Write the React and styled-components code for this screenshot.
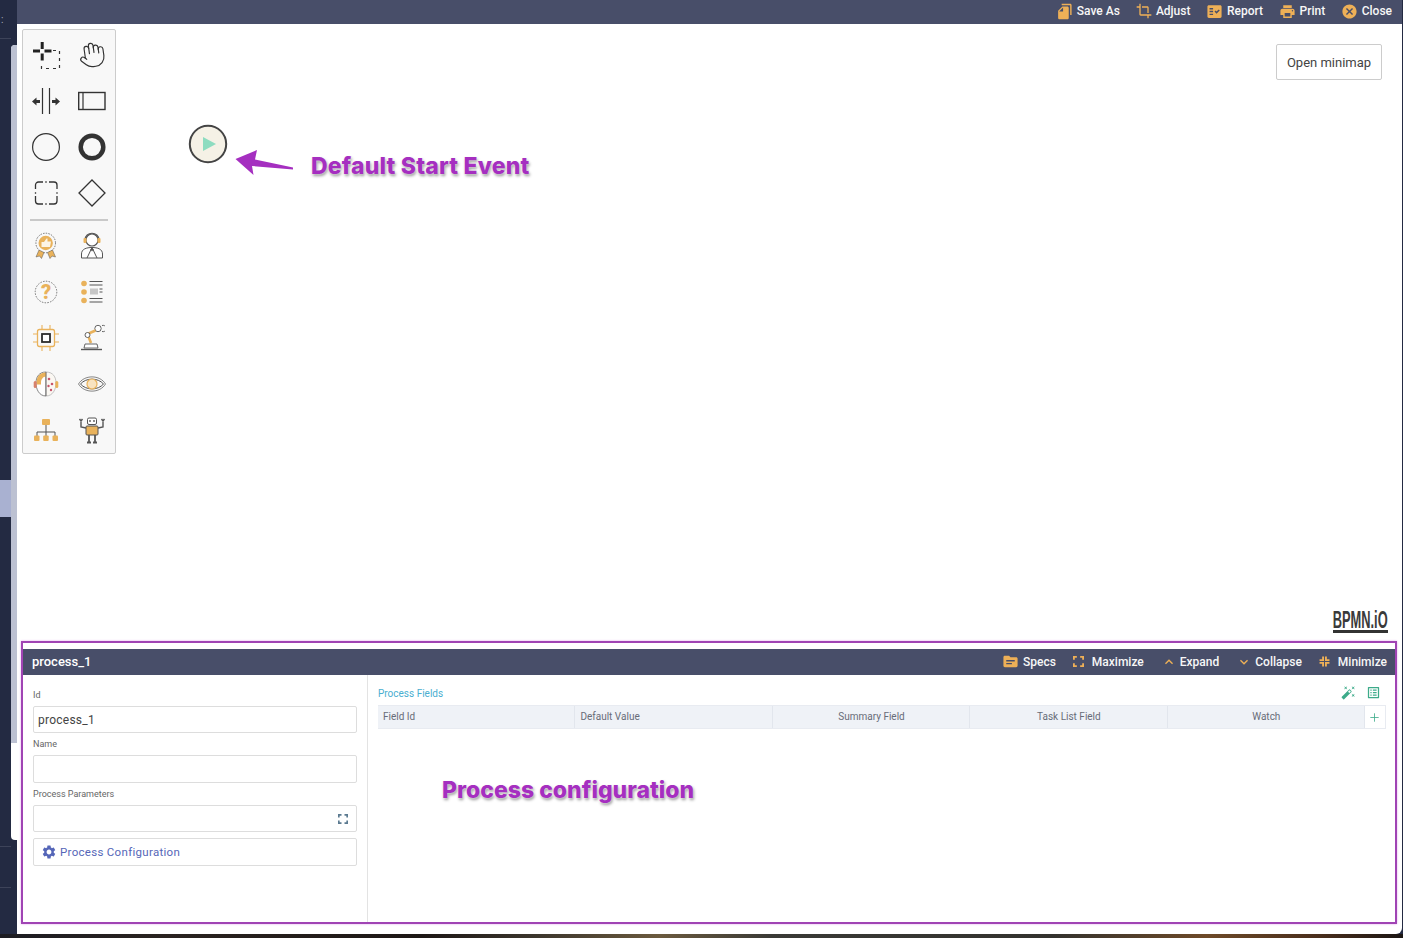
import React from "react";
import styled, { createGlobalStyle } from "styled-components";
import { MdFileCopy, MdCrop, MdFactCheck, MdPrint, MdCancel, MdTopic, MdAutoFixHigh, MdOutlineListAlt, MdSettings, MdKeyboardArrowUp, MdKeyboardArrowDown } from "react-icons/md";
import { Plus, Hand } from "lucide-react";

const Global = createGlobalStyle`
  html, body { margin: 0; padding: 0; background: #232a42; }
  body { font-family: Roboto, "Liberation Sans", sans-serif; overflow: hidden; }
  * { box-sizing: border-box; }
`;

const Page = styled.div`
  width: 1403px; height: 938px; display: flex; flex-direction: column; overflow: hidden;
  background: #232a42;
`;
const Row = styled.div`display: flex; height: 934px;`;
const WoodStrip = styled.div`
  height: 4px; flex: none;
  background: linear-gradient(90deg, #1c1c22 0, #2a2320 12%, #1d1715 30%, #3b352c 38%, #6b5a3e 47%, #3a3a36 55%, #33322e 75%, #6e4a28 86%, #4a2e1c 94%, #1b1613 100%);
`;
const Sidebar = styled.aside`width: 17px; flex: none; display: flex; background: #232a42;`;
const Nav = styled.div`width: 11px; flex: none; display: flex; flex-direction: column; color: #aab; font-size: 10px;`;
const NavGlyph = styled.div`height: 39px; line-height: 40px; padding-left: 1px; border-bottom: 1px solid #3d4359;`;
const NavActive = styled.div`height: 37px; margin-top: 441px; background: #a9b1d1;`;
const NavLine = styled.div`height: 1px; margin-top: ${p => p.$gap}px; background: #3d4359;`;
const Scroll = styled.div`
  width: 6px; flex: none; margin-top: 45px; height: 795px; background: #fff; border-radius: 4px 0 0 4px; overflow: hidden;
`;
const ScrollThumb = styled.div`height: 698px; background: #bcc1d2;`;

const Main = styled.main`
  width: 1385px; flex: none; display: flex; flex-direction: column; background: #fff; border-bottom-right-radius: 6px;
  margin-right: 1px;
`;
const TopBar = styled.header`
  height: 24px; flex: none; display: flex; align-items: center; justify-content: flex-end; gap: 16px; padding: 0 10px 2px 0;
  background: #484e69; color: #fff;
`;
const BarAction = styled.div`
  display: flex; align-items: center; gap: ${p => p.$gap ?? 3.5}px; font-size: 12px; font-weight: 500; white-space: nowrap; color: #f7f7f7;
  svg { color: #eeb057; flex: none; }
`;
const Canvas = styled.section`position: relative; height: 617px; flex: none; background: #fff;`;
const Palette = styled.div`
  position: absolute; left: 5px; top: 5px; width: 94px; height: 425px; padding-top: 2px;
  background: #f8f8f8; border: 1px solid #ccc; border-radius: 2px;
`;
const PaletteGrid = styled.div`display: grid; grid-template-columns: 46px 46px; grid-auto-rows: 46px;`;
const PaletteCell = styled.div`display: flex; align-items: center; justify-content: center;`;
const Separator = styled.hr`margin: 3px 7px 2px 7px; height: 2px; border: 0; background: #c9c9c9;`;
const MinimapButton = styled.button`
  position: absolute; right: 20px; top: 20px; width: 106px; height: 36px; padding: 0;
  font: 400 13px Roboto, sans-serif; color: #444; background: #fff; border: 1px solid #ccc; border-radius: 2px;
`;
const Note = styled.div`
  position: absolute; left: ${p => p.$x}px; top: ${p => p.$y}px; white-space: nowrap;
  font: 800 23px Inter, "Liberation Sans", sans-serif; color: #a52fc0; letter-spacing: ${p => p.$ls ?? 0}px;
  text-shadow: 0 0 2px #fff, 1px 2px 3px rgba(0,0,0,.42);
`;
const Pinned = styled.svg`position: absolute; left: ${p => p.$x}px; top: ${p => p.$y}px;`;
const Logo = styled.div`
  position: absolute; right: 14px; top: 586px; height: 23px; width: 55px; border-bottom: 3px solid #333;
  display: flex; justify-content: flex-end;
  font: 700 24px/20px "Liberation Sans", sans-serif; color: #3a3a3a;
  white-space: nowrap;
`;
const LogoText = styled.span`flex: none; transform: scaleX(.535); transform-origin: right center;`;

const Panel = styled.section`
  position: relative; margin-left: 4px; width: 1376px; height: 283px; flex: none; padding-top: 6px;
  border: 2px solid #a044b4; box-shadow: 0 0 2px #e3a8ee; display: flex; flex-direction: column; background: #fff;
`;
const PanelHeader = styled.div`
  height: 26px; flex: none; display: flex; align-items: center; padding: 0 8px 1px 9px; background: #484e69; color: #fff;
`;
const PanelTitle = styled.div`font-size: 13px; font-weight: 500; flex: 1;`;
const PanelActions = styled.div`display: flex; align-items: center; gap: 17px;`;
const PanelBody = styled.div`flex: 1; display: flex; min-height: 0;`;
const FormColumn = styled.div`
  width: 345px; flex: none; display: flex; flex-direction: column; padding: 14px 10px 0; border-right: 1px solid #e3e3e3;
`;
const Field = styled.div`display: flex; flex-direction: column; gap: 5px; margin-bottom: 5px;`;
const Label = styled.label`font-size: 9px; line-height: 12px; height: 12px; color: #666;`;
const InputBox = styled.div`
  height: ${p => p.$h}px; display: flex; align-items: center; justify-content: space-between; padding: 0 8px 0 4px;
  font-size: 12px; letter-spacing: .25px; color: #444; border: 1px solid #ddd; border-radius: 2px; background: #fff;
`;
const ConfigButton = styled.div`
  margin-top: 1px; height: 28px; display: flex; align-items: center; gap: 3px; padding-left: 7px;
  font-size: 11.5px; letter-spacing: .3px; color: #5566b8; border: 1px solid #ddd; border-radius: 2px;
`;
const FieldsColumn = styled.div`flex: 1; display: flex; flex-direction: column; padding: 0 9px 0 10px; min-width: 0;`;
const FieldsToolbar = styled.div`height: 30px; flex: none; display: flex; align-items: center; justify-content: space-between; padding: 7px 5px 0 0;`;
const FieldsTitle = styled.div`font-size: 10px; color: #4aaed0;`;
const ToolIcons = styled.div`display: flex; align-items: center; gap: 10px; margin-top: -3px; color: #3dab8a;`;
const TableHead = styled.div`
  display: grid; grid-template-columns: repeat(5, 1fr) 21px; height: 24px;
  background: #eff2f7; border: 1px solid #e8ebf1; border-width: 1px 0;
`;
const HeadCell = styled.div`
  display: flex; align-items: center; justify-content: ${p => p.$left ? "flex-start" : "center"}; padding: 0 0 1px ${p => p.$left ? 5 : 1}px;
  font-size: 10px; color: #686c78; border-right: 1px solid #e2e6ed;
`;
const AddCell = styled.div`display: flex; align-items: center; justify-content: center; background: #fff; color: #3dab8a; border-right: 1px solid #e8ebf1;`;

const ink = "#333";
const orange = "#e9b25b";
const grey = "#555";

const I = ({ children, s = 30 }) => <svg width={s} height={s} viewBox="0 0 30 30" fill="none">{children}</svg>;

const Lasso = () => <I>
  <path d="M2 11h7M13.500 11h7M11.200 2v7M11.200 13.500v7" stroke="#222" strokeWidth="3" />
  <path d="M22 10.500h6.500V28.500H10.500V22" stroke={ink} strokeWidth="1.200" strokeDasharray="3 4" />
</I>;
const SpaceTool = () => <I>
  <path d="M11.500 2v26M18.500 2v26" stroke={ink} strokeWidth="1.200" />
  <path d="M1 15.500l4.500-4v2.500h3.500v3h-3.500v2.500zM29 15.500l-4.500-4v2.500h-3.500v3h3.500v2.500z" fill={ink} />
</I>;
const Pool = () => <I>
  <rect x="1.700" y="6.500" width="26.300" height="17" stroke={ink} strokeWidth="1.400" />
  <path d="M6 6.500v17" stroke={ink} strokeWidth="1.200" />
</I>;
const Circle = ({ w, r }) => <I><circle cx="15" cy="15" r={r} stroke={ink} strokeWidth={w} /></I>;
const Sub = () => <I>
  <path d="M4.500 11V7a3 3 0 0 1 3-3H12M18 4h5a3 3 0 0 1 3 3v4M26 18v5a3 3 0 0 1-3 3h-5M12 26H7.500a3 3 0 0 1-3-3v-5M14.300 4h1.400M14.300 26h1.400M4.500 14.300v1.400M26 14.300v1.400" stroke={ink} strokeWidth="1.300" />
</I>;
const Gateway = () => <I><path d="M15 2L28 15L15 28L2 15Z" stroke={ink} strokeWidth="1.300" /></I>;

const Award = () => <I>
  <circle cx="14.700" cy="12" r="9.800" stroke={grey} strokeWidth=".8" strokeDasharray="1.500 1.200" />
  <circle cx="14.700" cy="12" r="7.200" fill={orange} />
  <path d="M10.500 11h2.500v5h-2.500zM13 11l2.500-3.500h1v3h3.500l-1 5.500h-6z" fill="#fff" opacity=".85" />
  <path d="M8 19l-3 7 3.500-1 2 2.500 2.500-6zM21.500 19l3 7-3.500-1-2 2.500-2.500-6z" fill={orange} stroke={grey} strokeWidth=".5" />
</I>;
const Agent = () => <I>
  <circle cx="15" cy="9" r="6" fill="#fff" stroke={grey} strokeWidth="1.100" />
  <path d="M8 9c0-9 14-9 14 0" stroke={grey} strokeWidth="1.200" />
  <rect x="6.500" y="7" width="3" height="5" rx="1" fill={orange} />
  <rect x="20.500" y="7" width="3" height="5" rx="1" fill={orange} />
  <path d="M4.500 27v-4c0-5 5-6.500 10.500-6.500s10.500 1.500 10.500 6.500v4zM15 16.500L10 27M15 16.500L20 27" fill="#fff" stroke={grey} strokeWidth="1" />
  <path d="M13 18h4l-2 2.500z" fill={grey} />
</I>;
const Question = () => <I>
  <circle cx="15" cy="15" r="10.800" stroke={grey} strokeWidth=".8" strokeDasharray="1.500 1.300" />
  <text x="15" y="22" textAnchor="middle" fontFamily="Roboto, sans-serif" fontWeight="900" fontSize="20" fill={orange}>?</text>
</I>;
const Checklist = () => <I>
  <circle cx="7" cy="6.500" r="2.800" fill={orange} /><circle cx="7" cy="15" r="2.800" fill={orange} /><circle cx="7" cy="23.500" r="2.800" fill={orange} />
  <path d="M12.500 4.500h13M12.500 8h13M12.500 21.500h13M12.500 25h13" stroke={grey} strokeWidth="1" />
  <rect x="13" y="11.500" width="8" height="6" fill="#c6c6c6" /><path d="M22.500 12h3M22.500 15h3" stroke={grey} strokeWidth="1" />
</I>;
const Chip = () => <I>
  <rect x="6.500" y="6.500" width="17" height="17" rx="2" stroke={orange} strokeWidth="1.300" />
  <path d="M11 2v4M19 2v4M11 24v4M19 24v4M2 11h4M2 19h4M24 11h4M24 19h4" stroke={orange} strokeWidth="1.100" />
  <rect x="11" y="11" width="8" height="8" fill="#fff" stroke="#2b2b2b" strokeWidth="1.800" />
</I>;
const RobotArm = () => <I>
  <circle cx="21" cy="5.500" r="3.200" stroke={grey} strokeWidth=".9" fill="#fff" />
  <path d="M25 2.500c2-.5 3 .5 3 .5M25 8.500c2 .5 3-.5 3-.5" stroke={grey} strokeWidth=".9" />
  <path d="M18.500 7.500L10.500 11L14 20" stroke={orange} strokeWidth="2.600" />
  <circle cx="10.500" cy="12" r="2.500" fill="#fff" stroke={grey} strokeWidth=".9" />
  <path d="M8 21h12l1 4H7z" fill="#fff" stroke={grey} strokeWidth=".9" />
  <path d="M4 26.500h21" stroke={grey} strokeWidth="1.400" />
</I>;
const Brain = () => <I>
  <path d="M15 3c-7 0-10 5-10 11 0 6 3 13 10 13z" fill="#fff" stroke={grey} strokeWidth=".7" />
  <path d="M15 3c7 0 10 5 10 11 0 6-3 13-10 13z" fill="#fbf8f3" stroke="#aaa" strokeWidth=".7" />
  <path d="M5.500 14c0-6 3-10.500 9.500-10.500v4c-3 0-5 3-5 6v2H6z" fill={orange} />
  <path d="M15 3v24" stroke={grey} strokeWidth=".7" />
  <rect x="2.700" y="12" width="3" height="7" rx="1.500" fill="#d8826c" />
  <rect x="24.300" y="12" width="3" height="7" rx="1.500" fill={orange} />
  <circle cx="18" cy="10" r="1.300" fill="#c8556a" /><circle cx="21" cy="15" r="1.300" fill="#c8556a" /><circle cx="17.500" cy="17" r="1.200" fill="#c8556a" /><circle cx="20" cy="21" r="1.200" fill="#c8556a" />
</I>;
const Eye = () => <I>
  <path d="M3.500 15C9 8.500 21 8.500 26.500 15C21 21.500 9 21.500 3.500 15Z" stroke={grey} strokeWidth="1" />
  <path d="M1.500 15C7 5.500 23 5.500 28.500 15C23 24.500 7 24.500 1.500 15Z" stroke={grey} strokeWidth=".7" />
  <circle cx="15" cy="15" r="5" fill="#f8e3c0" stroke={orange} strokeWidth="1.200" />
</I>;
const Org = () => <I>
  <rect x="11" y="4" width="8" height="6" rx="1" fill={orange} />
  <path d="M15 10v11M6 21v-4h18v4" stroke={grey} strokeWidth="1" />
  <rect x="3" y="20.500" width="5.500" height="5.500" rx="1" fill={orange} />
  <rect x="12.200" y="20.500" width="5.500" height="5.500" rx="1" fill={orange} />
  <rect x="21.500" y="20.500" width="5.500" height="5.500" rx="1" fill={orange} />
</I>;
const Robot = () => <I>
  <rect x="10.500" y="3" width="9" height="6.500" rx="1.500" fill="#fff" stroke={grey} strokeWidth="1" />
  <circle cx="13" cy="6" r=".9" fill={grey} /><circle cx="17" cy="6" r=".9" fill={grey} />
  <rect x="9" y="11" width="12" height="9" rx="1" fill={orange} stroke={grey} strokeWidth="1" />
  <path d="M9 13L4 12V5M21 13l5-1V5M2.500 4l1.500 2 1.500-2M24.500 4l1.500 2 1.500-2" stroke={grey} strokeWidth="1.400" />
  <path d="M12 20v7M18 20v7M10 27.500h4M16 27.500h4" stroke={grey} strokeWidth="1.800" />
</I>;

const CornerIcon = ({ size = 11, inward, color = "#eeb057" }) => (
  <svg width={size} height={size} viewBox="0 0 10 10" fill="none" stroke={color} strokeWidth="1.700">
    {inward
      ? <path d="M3.700 0.500v3.200H.5M6.300 0.500v3.200H9.500M3.700 9.500V6.300H.5M6.300 9.500V6.300H9.500" />
      : <path d="M.8 3.500V.8H3.500M6.500.8H9.200V3.500M.8 6.500V9.200H3.500M6.500 9.200H9.200V6.500" />}
  </svg>
);

const topTools = [<Lasso />, <Hand size={28} strokeWidth={1} color="#333" style={{ transform: "rotate(-8deg)" }} />, <SpaceTool />, <Pool />, <Circle w={1.200} r={13.400} />, <Circle w={4.500} r={11.300} />, <Sub />, <Gateway />];
const taskTools = [<Award />, <Agent />, <Question />, <Checklist />, <Chip />, <RobotArm />, <Brain />, <Eye />, <Org />, <Robot />];
const columns = [["Field Id", true], ["Default Value", true], ["Summary Field"], ["Task List Field"], ["Watch"]];

export default function App() {
  return (
    <Page>
      <Global />
      <Row>
        <Sidebar>
          <Nav>
            <NavGlyph>:</NavGlyph>
            <NavActive />
            <NavLine $gap={329} />
            <NavLine $gap={40} />
          </Nav>
          <Scroll><ScrollThumb /></Scroll>
        </Sidebar>
        <Main>
          <TopBar>
            <BarAction><MdFileCopy size={17} style={{ transform: "scaleX(-1)" }} />Save As</BarAction>
            <BarAction $gap={4}><MdCrop size={16} />Adjust</BarAction>
            <BarAction><MdFactCheck size={17} />Report</BarAction>
            <BarAction><MdPrint size={17} />Print</BarAction>
            <BarAction><MdCancel size={17} />Close</BarAction>
          </TopBar>
          <Canvas>
            <Palette>
              <PaletteGrid>{topTools.map((t, i) => <PaletteCell key={i}>{t}</PaletteCell>)}</PaletteGrid>
              <Separator />
              <PaletteGrid>{taskTools.map((t, i) => <PaletteCell key={i}>{t}</PaletteCell>)}</PaletteGrid>
            </Palette>
            <Pinned $x={171} $y={100} width="40" height="40" viewBox="0 0 40 40" fill="none">
              <circle cx="20" cy="20" r="18.200" fill="#f5f1e6" stroke="#444" strokeWidth="2" />
              <path d="M15 13l13 7-13 7z" fill="#8ddcc0" />
            </Pinned>
            <Pinned $x={215} $y={122} width="64" height="34" viewBox="0 0 64 34">
              <path d="M3.500 13L25 4L23 13.500L61 21.500L61 23.500L20 20L21.500 29Z" fill="#a52fc0" />
            </Pinned>
            <Note $x={294} $y={128} $ls={0.2}>Default Start Event</Note>
            <MinimapButton>Open minimap</MinimapButton>
            <Logo><LogoText>BPMN.iO</LogoText></Logo>
          </Canvas>
          <Panel>
            <PanelHeader>
              <PanelTitle>process_1</PanelTitle>
              <PanelActions>
                <BarAction><MdTopic size={17} />Specs</BarAction>
                <BarAction $gap={8}><CornerIcon />Maximize</BarAction>
                <BarAction $gap={3}><MdKeyboardArrowUp size={16} />Expand</BarAction>
                <BarAction $gap={3}><MdKeyboardArrowDown size={16} />Collapse</BarAction>
                <BarAction $gap={8}><CornerIcon inward />Minimize</BarAction>
              </PanelActions>
            </PanelHeader>
            <PanelBody>
              <FormColumn>
                <Field><Label>Id</Label><InputBox $h={27}>process_1</InputBox></Field>
                <Field><Label>Name</Label><InputBox $h={28} /></Field>
                <Field><Label>Process Parameters</Label><InputBox $h={27}><span /><CornerIcon size={10} color="#5b7a90" /></InputBox></Field>
                <ConfigButton><MdSettings size={16} />Process Configuration</ConfigButton>
              </FormColumn>
              <FieldsColumn>
                <FieldsToolbar>
                  <FieldsTitle>Process Fields</FieldsTitle>
                  <ToolIcons><MdAutoFixHigh size={15} /><MdOutlineListAlt size={15} /></ToolIcons>
                </FieldsToolbar>
                <TableHead>
                  {columns.map(([c, left]) => <HeadCell key={c} $left={left}>{c}</HeadCell>)}
                  <AddCell><Plus size={13} strokeWidth={1.500} /></AddCell>
                </TableHead>
              </FieldsColumn>
            </PanelBody>
            <Note $x={419} $y={133}>Process configuration</Note>
          </Panel>
        </Main>
      </Row>
      <WoodStrip />
    </Page>
  );
}
